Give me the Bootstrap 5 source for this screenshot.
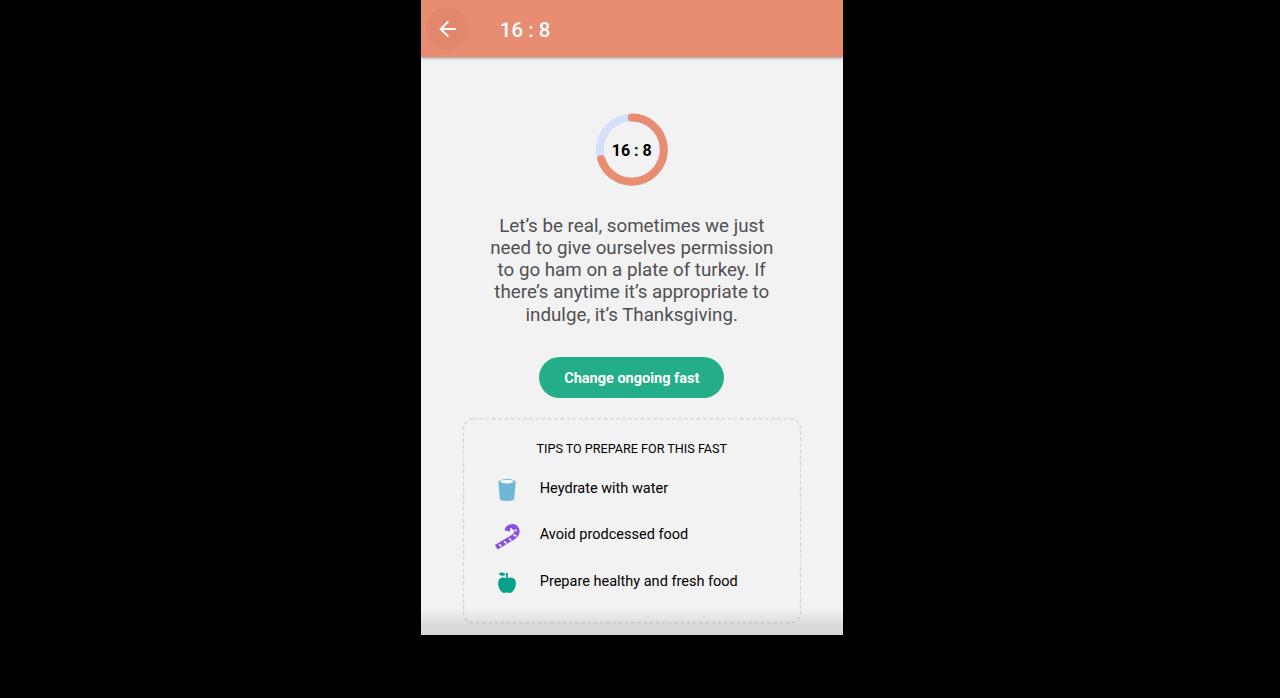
<!DOCTYPE html>
<html lang="en">
<head>
<meta charset="utf-8">
<meta name="viewport" content="width=device-width, initial-scale=1">
<title>16 : 8</title>
<link href="https://cdn.jsdelivr.net/npm/bootstrap@5.3.0/dist/css/bootstrap.min.css" rel="stylesheet">
<style>
body{background:#000;font-family:Roboto,"Liberation Sans",sans-serif;color:#111;height:698px;overflow:hidden}
.phone{width:422.5px;height:635px;margin-left:420.5px;background:#f2f2f2}
.topbar{height:57px;background:#e88c72;box-shadow:0 1px 3px rgba(0,0,0,.4);z-index:1;padding-left:5.5px}
.back-btn{width:43px;height:43px;background:#e2866c;border-radius:50%}
.topbar h1{font-size:20.5px;line-height:24px;font-weight:500;margin-left:30.8px;padding-top:2px}
.ring{width:74px;height:74px;margin-top:55.5px}
.ring-label{font-size:16px;font-weight:700;color:#000;padding-top:3px}
.intro{font-size:18.75px;line-height:22.3px;color:#505052;margin-top:28px}
.change-btn{width:185px;height:41px;margin-top:31px;background:#23ae89;color:#fff;font-size:14.5px;font-weight:700;line-height:41px;padding-top:1px!important}
.change-btn:hover{background:#1e9d7b;color:#fff}
.tips{width:338px;height:206px;margin-top:20px}
.tips h2{font-size:12.6px;line-height:16px;font-weight:400;color:#000;margin-top:23px}
.tips ul{padding-top:8.7px}
.tip-row{height:46.3px;padding-left:29px;font-size:14.5px;gap:18px;color:#000}
.tip-row svg{width:30px;height:30px;margin-top:3px}
.sheet-edge{height:26px;background:linear-gradient(rgba(0,0,0,0),rgba(0,0,0,.1) 64%,rgba(0,0,0,.16) 65%,rgba(0,0,0,.09) 69%,rgba(0,0,0,.12))}
</style>
</head>
<body>
<main class="phone position-relative d-flex flex-column align-items-center overflow-hidden">
  <header class="topbar w-100 d-flex align-items-center flex-shrink-0 text-white">
    <button class="back-btn btn p-0 border-0 d-flex align-items-center justify-content-center" aria-label="Back">
      <svg width="18" height="18" viewBox="0 0 18 18" fill="none" stroke="#fff" stroke-width="2"><path d="M17 9H2M9.3 1.4 1.7 9l7.6 7.6"/></svg>
    </button>
    <h1 class="mb-0">16 : 8</h1>
  </header>
  <div class="ring position-relative d-flex align-items-center justify-content-center flex-shrink-0">
    <svg class="position-absolute top-0 start-0" width="74" height="74" viewBox="0 0 74 74" fill="none" stroke-width="8">
      <circle cx="36.8" cy="36.6" r="32" stroke="#d6e0fa"/>
      <path d="M36.8 4.6a32 32 0 1 1-30.6 41.4" stroke="#e88c72" stroke-linecap="round"/>
    </svg>
    <span class="ring-label position-relative">16 : 8</span>
  </div>
  <p class="intro text-center mb-0 text-nowrap">Let’s be real, sometimes we just<br>need to give ourselves permission<br>to go ham on a plate of turkey. If<br>there’s anytime it’s appropriate to<br>indulge, it’s Thanksgiving.</p>
  <button class="change-btn btn rounded-pill border-0 p-0 flex-shrink-0">Change ongoing fast</button>
  <section class="tips position-relative flex-shrink-0">
    <svg class="position-absolute top-0 start-0" width="338" height="206" fill="none"><rect x=".5" y=".8" width="337" height="204" rx="10" stroke="#d2d2d2" stroke-width="1.2" stroke-dasharray="3.6 2.6"/></svg>
    <h2 class="text-center mb-0">TIPS TO PREPARE FOR THIS FAST</h2>
    <ul class="list-unstyled mb-0 position-relative">
      <li class="tip-row d-flex align-items-center">
        <svg viewBox="0 0 30 30"><path d="M6.3 6.2Q15 1.2 23.7 6.2L22.2 23.8Q22 26 15 26T7.8 23.8Z" fill="#6eb7da"/><ellipse cx="15" cy="6.6" rx="6.7" ry="1.8" fill="#f3f8fb"/></svg>
        <span>Heydrate with water</span>
      </li>
      <li class="tip-row d-flex align-items-center">
        <svg viewBox="0 0 30 30" fill="none"><path d="M4.2 25.2 20.5 15.6Q26.4 11.6 24.6 7.4C22.4 3.2 16.2 4.2 15 8.8" stroke="#8750df" stroke-width="5.2" stroke-linejoin="round"/><path d="m7 22.2 2.4 2.1m2.6-5 2.4 2.1m2.6-5 2.4 2.1m2-5.8 3 1.6m.4-6.6-2 1.3m-4.1-3 .6 2.2" stroke="#f3effb" stroke-width="1.6"/></svg>
        <span>Avoid prodcessed food</span>
      </li>
      <li class="tip-row d-flex align-items-center">
        <svg viewBox="0 0 30 30" fill="#06a18b"><path d="M15 10.6C18 8.8 23.9 9 23.9 15.2c0 4.3-3 9.8-6 9.8-1.4 0-1.7-.6-2.9-.6s-1.5.6-2.9.6c-3 0-6-5.5-6-9.8C6.1 9 12 8.8 15 10.6Z"/><path d="M14.1 10.5V5.1h1.8v5.4ZM6.8 5.7C9 3.7 12.2 4.1 13.7 6.8 10.8 8.4 8.2 7.9 6.8 5.7Z"/></svg>
        <span>Prepare healthy and fresh food</span>
      </li>
    </ul>
  </section>
  <div class="sheet-edge position-absolute bottom-0 start-0 w-100"></div>
</main>
<script src="https://cdn.jsdelivr.net/npm/bootstrap@5.3.0/dist/js/bootstrap.bundle.min.js"></script>
</body>
</html>
